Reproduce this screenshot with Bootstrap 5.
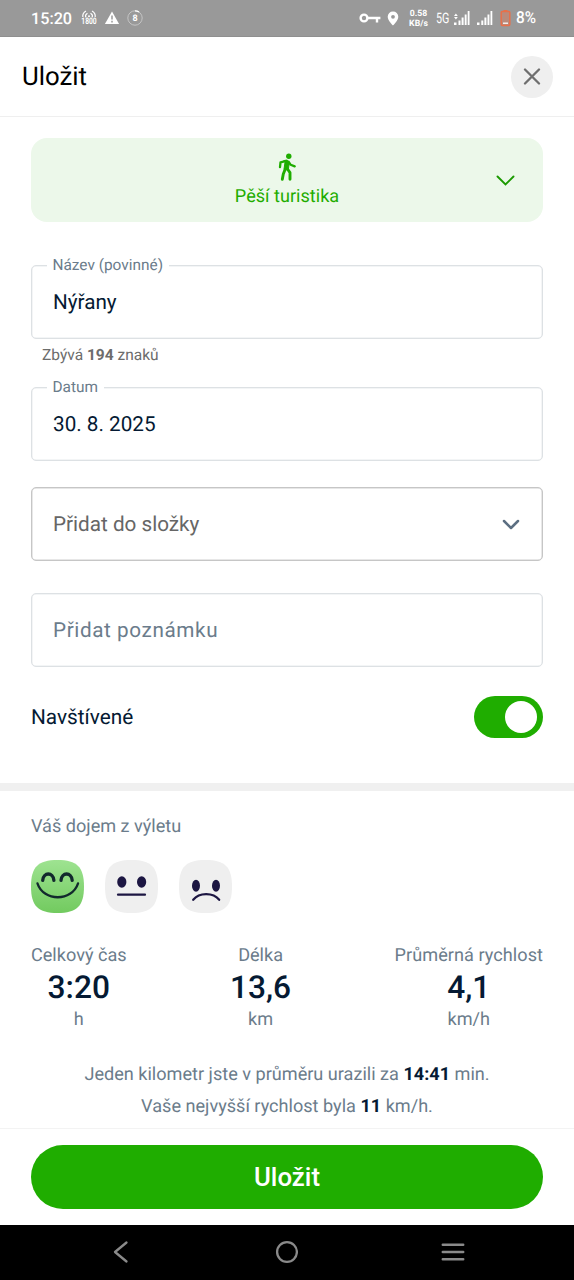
<!DOCTYPE html>
<html lang="cs">
<head>
<meta charset="utf-8">
<meta name="viewport" content="width=device-width, initial-scale=1">
<title>Uložit</title>
<link href="https://cdn.jsdelivr.net/npm/bootstrap@5.3.0/dist/css/bootstrap.min.css" rel="stylesheet">
<style>
  :root { --green: #1fad00; --ink: #051a33; --slate: #6b7c8b; }
  body { font-family: Roboto, "Noto Sans", sans-serif; font-size: 18.1px; line-height: 24px; color: var(--ink); background: #fff; text-rendering: geometricPrecision; }
  svg { display: block; flex: none; }
  .screen { width: 574px; height: 1280px; overflow: hidden; }
  .statusbar { height: 37px; background: #999; color: #fff; padding: 0 37px 0 31px; border-bottom: 1px solid #8f8f8f; }
  .clock { font-size: 16.2px; font-weight: 500; line-height: 20px; width: 50px; padding-top: 1px; }
  .band { font-size: 9px; font-weight: 700; line-height: 8px; }
  .band-narrow { width: 16px; transform: scaleX(.74); display: flex; justify-content: center; }
  .rate { font-size: 8.7px; font-weight: 700; line-height: 10px; width: 20px; text-align: center; margin-left: 9.5px; padding-top: 1px; white-space: nowrap; }
  .gen { font-size: 14.5px; line-height: 18px; width: 14px; margin-left: 7px; padding-top: 1px; transform: scaleX(.74); transform-origin: left; white-space: nowrap; }
  .pct { font-size: 16.5px; font-weight: 500; line-height: 20px; width: 21px; margin-left: 5px; padding-top: 2px; transform: scaleX(.93); transform-origin: left; }
  .titlebar { height: 80px; padding: 0 21px; border-bottom: 1px solid #efefef; }
  .titlebar h1 { font-size: 25.8px; font-weight: 400; line-height: 32px; color: #000; padding: 1px 0 0 1px; }
  .round-close { width: 42px; height: 42px; background: #efefef; }
  .content-area { padding: 21px 31px 0; height: 666px; }
  .activity { height: 84px; border-radius: 16px; background: #ecf8ea; color: var(--green); padding-top: 15px; }
  .activity-chevron { right: 28px; top: 36px; }
  .activity-label { font-size: 18.1px; line-height: 24px; margin-top: 4px; }
  .outlined { height: 74px; border: 1px solid #dde1e4; box-shadow: inset 0 0 0 .5px #e8ebed; border-radius: 5px; padding: 0 21px; font-size: 20.7px; }
  .outlined-strong { border-color: #c6c6c6; box-shadow: inset 0 0 0 .5px #d0d0d0; }
  .field-text { padding-top: 2px; }
  .float-legend { top: -11px; left: 15px; padding: 0 5.5px; background: #fff; font-size: 15.4px; line-height: 20px; color: var(--slate); }
  .hint { font-size: 15.5px; line-height: 20px; color: #6c6c6c; margin: 6px 0 0 11px; }
  .toggle { width: 69px; height: 42px; background: var(--green); padding-right: 6px; }
  .toggle-knob { width: 32px; height: 32px; }
  .rating { height: 345px; border-top: 8px solid #f0f0f0; padding: 24px 31px 0; color: var(--slate); }
  .stat-value { font-size: 31.7px; font-weight: 500; line-height: 40px; color: var(--ink); }
  .summary { line-height: 32px; margin-top: 27px; }
  .summary b { color: var(--ink); }
  .footer-bar { height: 96.5px; border-top: 1px solid #f3f3f3; padding: 16px 31px 0; }
  .save-btn { height: 64px; background: var(--green); color: #fff; font-size: 25.8px; font-weight: 500; }
  .sysnav { height: 55.5px; background: #000; padding: 0 109px 0 112px; }
</style>
</head>
<body>
<div class="screen d-flex flex-column">

  <div class="statusbar d-flex align-items-center flex-shrink-0">
    <span class="clock">15:20</span>
    <div class="d-flex flex-column align-items-center">
      <svg width="16" height="8" viewBox="0 0 16 8" fill="none" stroke="#fff" stroke-width="1.2">
        <path d="M1.800 7A6 6 0 0 1 5 1M14.200 7A6 6 0 0 0 11 1M4.800 7.400A3.400 3.400 0 0 1 6.500 3.200M11.200 7.400A3.400 3.400 0 0 0 9.500 3.200"/>
        <circle cx="8" cy="6.200" r="1" fill="#fff" stroke="none"/>
      </svg>
      <span class="band band-narrow">1800</span>
    </div>
    <svg style="margin-left:7px" width="16" height="14" viewBox="0 0 15 14"><path d="M7.500.6 14.600 13H.4Z" fill="#fff"/><path d="M7.500 4.600v4M7.500 9.800v1.700" stroke="#999" stroke-width="1.500"/></svg>
    <div class="position-relative" style="margin-left:7px">
      <svg width="16" height="16" viewBox="0 0 16 16" fill="none"><circle cx="8" cy="8" r="7.200" stroke="#c4c4c4" stroke-width="1"/><path d="M8 .8a7.200 7.200 0 0 1 4 1.200" stroke="#fff" stroke-width="1.300"/></svg>
      <span class="band position-absolute start-50 translate-middle" style="top:9px">8</span>
    </div>

    <svg class="ms-auto" width="22" height="12" viewBox="0 0 22 12" fill="none" stroke="#fff"><circle cx="5" cy="6" r="3.400" stroke-width="2.400"/><path d="M9 6h12.400M18 6v4.500" stroke-width="2.400"/></svg>
    <svg style="margin-left:6.500px" width="12" height="15" viewBox="0 0 12 15"><path fill="#fff" fill-rule="evenodd" d="M6 .6a5.200 5.200 0 0 0-5.300 5.200C.7 9.600 6 14.600 6 14.600s5.300-5 5.300-8.800A5.200 5.200 0 0 0 6 .6Zm0 3.300a1.900 1.900 0 1 1 0 3.800 1.900 1.900 0 0 1 0-3.800Z"/></svg>
    <div class="rate">0.58<br>KB/s</div>
    <span class="gen">5G</span>
    <svg style="margin-left:4px" width="16" height="14" viewBox="0 0 16 14" fill="#fff"><path d="M0 5 1.900 2.500 3.800 5zM0 6l1.900 2.500L3.800 6zM0 11.500h2.500V14H0zM4.500 9.500h2V14h-2zM7.600 6.500h2V14h-2zM10.700 3.500h1.900V14h-1.900zM13.700 0h1.800v14h-1.800z"/></svg>
    <svg style="margin-left:7.500px" width="16" height="14" viewBox="0 0 16 14" fill="#fff"><path d="M0 11.500h2.500V14H0zM4.300 9.500h2V14h-2zM7.400 6.500h2V14h-2zM10.500 3.500h1.900V14h-1.900zM13.500 0h1.800v14h-1.800z"/></svg>
    <svg style="margin-left:7px" width="11" height="18" viewBox="0 0 11 18"><path d="M3.500 2.500V1h4v1.500" fill="#e8704a"/><rect x="1.200" y="2.500" width="8.600" height="14" rx="1" fill="#b98b7c" stroke="#e8704a" stroke-width="1.500"/><path d="M3 14.200h5" stroke="#fff" stroke-width="1.300"/></svg>
    <span class="pct">8%</span>
  </div>

  <header class="titlebar d-flex align-items-center justify-content-between flex-shrink-0">
    <h1 class="m-0">Uložit</h1>
    <button type="button" class="round-close btn rounded-circle border-0 p-0 d-flex align-items-center justify-content-center" aria-label="Zavřít">
      <svg width="18" height="18" viewBox="0 0 18 18" stroke="#6f6f6f" stroke-width="2.300" stroke-linecap="round"><path d="M2 1.500l14 14M16 1.500l-14 14"/></svg>
    </button>
  </header>

  <main class="content-area flex-shrink-0">
    <div class="activity position-relative d-flex flex-column align-items-center">
      <svg width="18" height="28" viewBox="0 0 18 28" fill="none" stroke="#1fad00" stroke-linecap="round" stroke-linejoin="round">
        <circle cx="10.800" cy="3.300" r="2.700" fill="#1fad00" stroke="none"/>
        <path d="M6.200 7.500 9.300 7.200l2 2-1 7.800-4.300-.6 1-7z" fill="#1fad00" stroke-width="1"/>
        <path d="M8.300 7.900 2.500 9.300 2 14.200M10.700 8.800l2 3 4 1.600" stroke-width="2.300"/>
        <path d="M7.300 16 5.300 21 4.300 26.300M9.500 16l2.500 3.600V26.300" stroke-width="2.900"/>
      </svg>
      <span class="activity-label">Pěší turistika</span>
      <svg class="activity-chevron position-absolute" width="19" height="12" viewBox="0 0 19 12" fill="none" stroke="#1b9a00" stroke-width="1.900" stroke-linecap="round"><path d="M1.500 2.500l8 8 8-8"/></svg>
    </div>

    <div class="outlined position-relative d-flex align-items-center" style="margin-top:43px">
      <span class="float-legend position-absolute">Název (povinné)</span>
      <span class="field-text">Nýřany</span>
    </div>
    <div class="hint">Zbývá <b>194</b> znaků</div>

    <div class="outlined position-relative d-flex align-items-center" style="margin-top:22px">
      <span class="float-legend position-absolute">Datum</span>
      <span class="field-text">30. 8. 2025</span>
    </div>

    <div class="outlined outlined-strong d-flex align-items-center justify-content-between" style="margin-top:26px">
      <span class="field-text" style="color:#666">Přidat do složky</span>
      <svg style="margin-right:1px" width="18" height="11" viewBox="0 0 18 11" fill="none" stroke="#5c6f82" stroke-width="2.500" stroke-linecap="round" stroke-linejoin="round"><path d="M2 2l7 7 7-7"/></svg>
    </div>

    <div class="outlined d-flex align-items-center" style="margin-top:32px">
      <span class="field-text" style="color:var(--slate);letter-spacing:.6px">Přidat poznámku</span>
    </div>

    <div class="d-flex align-items-center justify-content-between" style="margin-top:29px">
      <span class="field-text" style="font-size:20.800px">Navštívené</span>
      <div class="toggle rounded-pill d-flex align-items-center justify-content-end" role="switch" aria-checked="true">
        <span class="toggle-knob rounded-circle bg-white"></span>
      </div>
    </div>
  </main>

  <section class="rating flex-shrink-0">
    <div>Váš dojem z výletu</div>
    <div class="d-flex" style="gap:21px;margin-top:21px">
      <svg width="53" height="53" viewBox="0 0 53 53" fill="none" stroke-linecap="round">
        <defs><linearGradient id="joy" x1="0" y1="0" x2="0" y2="1"><stop offset="0" stop-color="#9ee391"/><stop offset="1" stop-color="#72ca5f"/></linearGradient></defs>
        <path d="M26.500 0C46 0 53 7 53 26.500S46 53 26.500 53 0 46 0 26.500 7 0 26.500 0Z" fill="url(#joy)"/>
        <path d="M11.700 20.300c.6-8.400 10.600-8.400 11.200 0M30 20.300c.6-8.400 10.600-8.400 11.200 0" stroke="#12292d" stroke-width="3.300"/>
        <path d="M6.500 23.500c6 18.300 34.500 18.300 40.500 0" stroke="#12292d" stroke-width="2.400"/>
      </svg>
      <svg width="53" height="53" viewBox="0 0 53 53" fill="none" stroke-linecap="round">
        <path d="M26.500 0C46 0 53 7 53 26.500S46 53 26.500 53 0 46 0 26.500 7 0 26.500 0Z" fill="#efefef"/>
        <ellipse cx="16.800" cy="22" rx="4.600" ry="5.700" fill="#1c1642"/><ellipse cx="36.600" cy="22" rx="4.600" ry="5.700" fill="#1c1642"/>
        <path d="M13 34.700h27" stroke="#1c1642" stroke-width="2.200"/>
      </svg>
      <svg width="53" height="53" viewBox="0 0 53 53" fill="none" stroke-linecap="round">
        <path d="M26.500 0C46 0 53 7 53 26.500S46 53 26.500 53 0 46 0 26.500 7 0 26.500 0Z" fill="#efefef"/>
        <ellipse cx="17" cy="25.700" rx="4" ry="6" fill="#1c1642"/><ellipse cx="37" cy="25.700" rx="4" ry="6" fill="#1c1642"/>
        <path d="M14.200 39.800c6-7.500 20-7.500 26 0" stroke="#1c1642" stroke-width="2.200"/>
      </svg>
    </div>
    <div class="d-flex justify-content-between text-center" style="margin-top:31px">
      <div><div>Celkový čas</div><div class="stat-value">3:20</div><div>h</div></div>
      <div><div>Délka</div><div class="stat-value">13,6</div><div>km</div></div>
      <div><div style="letter-spacing:.05px">Průměrná rychlost</div><div class="stat-value">4,1</div><div>km/h</div></div>
    </div>
    <div class="summary text-center">
      Jeden kilometr jste v průměru urazili za <b>14:41</b> min.<br>
      Vaše nejvyšší rychlost byla <b>11</b> km/h.
    </div>
  </section>

  <footer class="footer-bar flex-shrink-0">
    <button type="button" class="save-btn btn border-0 rounded-pill w-100 p-0">Uložit</button>
  </footer>

  <nav class="sysnav flex-shrink-0 d-flex align-items-center justify-content-between">
    <svg width="18" height="24" viewBox="0 0 18 24" fill="none" stroke="#8a8a8a" stroke-width="2.300" stroke-linecap="round" stroke-linejoin="round"><path d="M14.500 2.500 3 12l11.500 9.500"/></svg>
    <svg width="24" height="24" viewBox="0 0 24 24" fill="none" stroke="#8a8a8a" stroke-width="2.300"><circle cx="13" cy="12" r="9.900"/></svg>
    <svg width="24" height="24" viewBox="0 0 24 24" stroke="#8a8a8a" stroke-width="2.500" stroke-linecap="round"><path d="M1.800 4.800h20.400M1.800 12h20.400M1.800 19.200h20.400"/></svg>
  </nav>
</div>
<script src="https://cdn.jsdelivr.net/npm/bootstrap@5.3.0/dist/js/bootstrap.bundle.min.js"></script>
</body>
</html>
